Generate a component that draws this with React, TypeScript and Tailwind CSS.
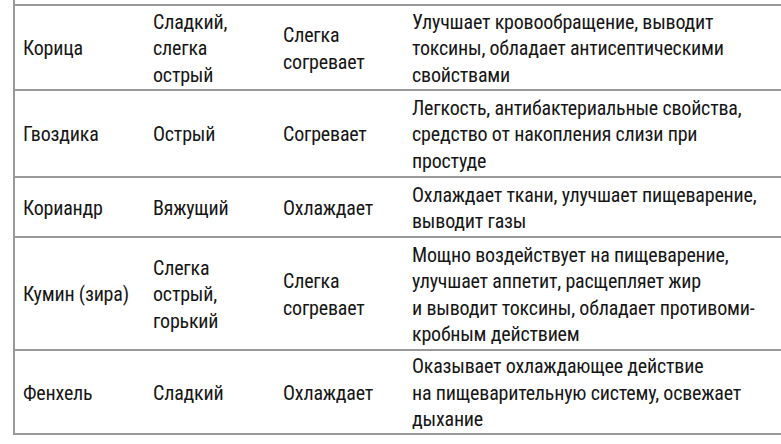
import React from "react";

type Row = { name: string; taste: string[]; effect: string[]; props: string[]; h: string };

const rows: Row[] = [
  {
    name: "Корица",
    taste: ["Сладкий,", "слегка", "острый"],
    effect: ["Слегка", "согревает"],
    props: ["Улучшает кровообращение, выводит", "токсины, обладает антисептическими", "свойствами"],
    h: "h-[85px]",
  },
  {
    name: "Гвоздика",
    taste: ["Острый"],
    effect: ["Согревает"],
    props: ["Легкость, антибактериальные свойства,", "средство от накопления слизи при", "простуде"],
    h: "h-[87px]",
  },
  {
    name: "Кориандр",
    taste: ["Вяжущий"],
    effect: ["Охлаждает"],
    props: ["Охлаждает ткани, улучшает пищеварение,", "выводит газы"],
    h: "h-[60px]",
  },
  {
    name: "Кумин (зира)",
    taste: ["Слегка", "острый,", "горький"],
    effect: ["Слегка", "согревает"],
    props: [
      "Мощно воздействует на пищеварение,",
      "улучшает аппетит, расщепляет жир",
      "и выводит токсины, обладает противоми-",
      "кробным действием",
    ],
    h: "h-[113px]",
  },
  {
    name: "Фенхель",
    taste: ["Сладкий"],
    effect: ["Охлаждает"],
    props: ["Оказывает охлаждающее действие", "на пищеварительную систему, освежает", "дыхание"],
    h: "h-[86px]",
  },
];

function Lines({ lines }: { lines: string[] }) {
  return (
    <div className="flex flex-col">
      {lines.map((l, i) => (
        <span key={i} className="whitespace-nowrap">
          {l}
        </span>
      ))}
    </div>
  );
}

export default function App() {
  return (
    <div
      className="w-[781px] h-[444px] bg-white overflow-hidden pl-[13px] text-[20px] leading-[26.5px] text-[#161616] tracking-[-0.2px] [font-stretch:82%] [font-weight:440]"
      style={{ fontFamily: "'Roboto Condensed', Roboto, 'Liberation Sans', sans-serif" }}
    >
      <div className="border-l-2 border-[#999999] w-[768px]">
        <div className="h-[4px]" />
        {rows.map((r, i) => (
          <div
            key={i}
            className={`grid grid-cols-[130px_130px_129px_1fr] items-center border-t-2 border-[#999999] pt-[2px] ${r.h} ${
              i === rows.length - 1 ? "border-b-2" : ""
            }`}
          >
            <div className="pl-2">{r.name}</div>
            <div className="pl-2">
              <Lines lines={r.taste} />
            </div>
            <div className="pl-2">
              <Lines lines={r.effect} />
            </div>
            <div className="pl-2">
              <Lines lines={r.props} />
            </div>
          </div>
        ))}
      </div>
    </div>
  );
}
